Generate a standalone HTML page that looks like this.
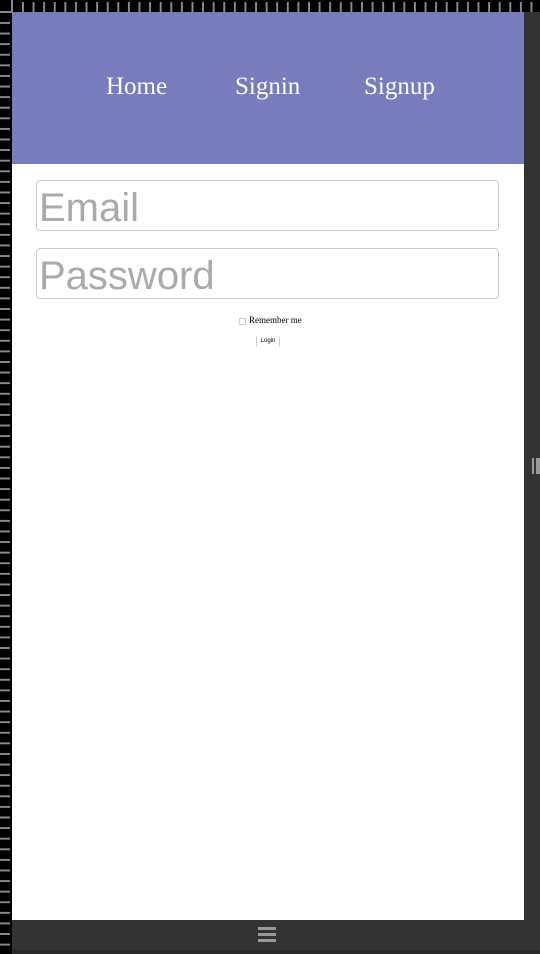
<!DOCTYPE html>
<html><head><meta charset="utf-8"><style>
*{margin:0;padding:0;box-sizing:border-box}
html,body{width:540px;height:954px;overflow:hidden;background:#000;position:relative;font-family:"Liberation Sans",sans-serif}
.rt{position:absolute;left:22px;top:2px;width:518px;height:10px;background:linear-gradient(90deg,#8a8a8a 0,#8a8a8a 2px,transparent 2px);background-size:10.6px 10px;background-repeat:repeat-x}
.rl{position:absolute;left:0;top:22px;width:10px;height:932px;background:linear-gradient(180deg,#8a8a8a 0,#8a8a8a 2px,transparent 2px);background-size:10px 10.6px;background-repeat:repeat-y}
.vl{position:absolute;left:11px;top:0;width:2px;height:12px;background:#8a8a8a}
.hl{position:absolute;left:0;top:11px;width:12px;height:2px;background:#8a8a8a}
.page{position:absolute;left:12px;top:12px;width:512px;height:908px;background:#fff}
.right{position:absolute;left:524px;top:12px;width:16px;height:942px;background:#333}
.h1b{position:absolute;left:532px;top:458px;width:2px;height:16px;background:#999}
.h2b{position:absolute;left:536px;top:458px;width:4px;height:16px;background:#999}
.bot{position:absolute;left:12px;top:920px;width:528px;height:34px;background:#333;border-bottom:4px solid #2a2a2a}
.bar{position:absolute;left:258px;width:18px;height:3px;background:#999}
header{position:absolute;left:0;top:0;width:512px;height:152px;background:#787cbc}
header span{position:absolute;top:61px;font-family:"Liberation Serif",serif;font-size:25px;color:#fff}
.inp{position:absolute;left:24px;width:463px;height:51px;border:1px solid #ccc;border-radius:4px;font-size:40px;color:#aaa;padding-left:2px;padding-top:2px;line-height:51px}
.cb{position:absolute;left:227px;top:306px;width:7px;height:7px;border:1px solid #ccc;border-radius:1px}
.rm{position:absolute;left:237px;top:303px;font-family:"Liberation Serif",serif;font-size:9px;color:#000}
.btn{position:absolute;left:244px;top:324px;width:24px;height:11px;border-left:1px solid #ccc;border-right:1px solid #ccc;border-radius:2px;font-size:6px;line-height:11px;text-align:center;color:#000}
</style></head><body>
<div class="rt"></div><div class="rl"></div><div class="vl"></div><div class="hl"></div>
<div class="page">
<header><span style="left:94px">Home</span><span style="left:223px">Signin</span><span style="left:352px">Signup</span></header>
<div class="inp" style="top:168px">Email</div>
<div class="inp" style="top:236px">Password</div>
<div class="cb"></div><div class="rm">Remember me</div>
<div class="btn">Login</div>
</div>
<div class="right"></div><div class="h1b"></div><div class="h2b"></div>
<div class="bot"></div>
<div class="bar" style="top:927px"></div><div class="bar" style="top:933px"></div><div class="bar" style="top:939px"></div>
</body></html>
